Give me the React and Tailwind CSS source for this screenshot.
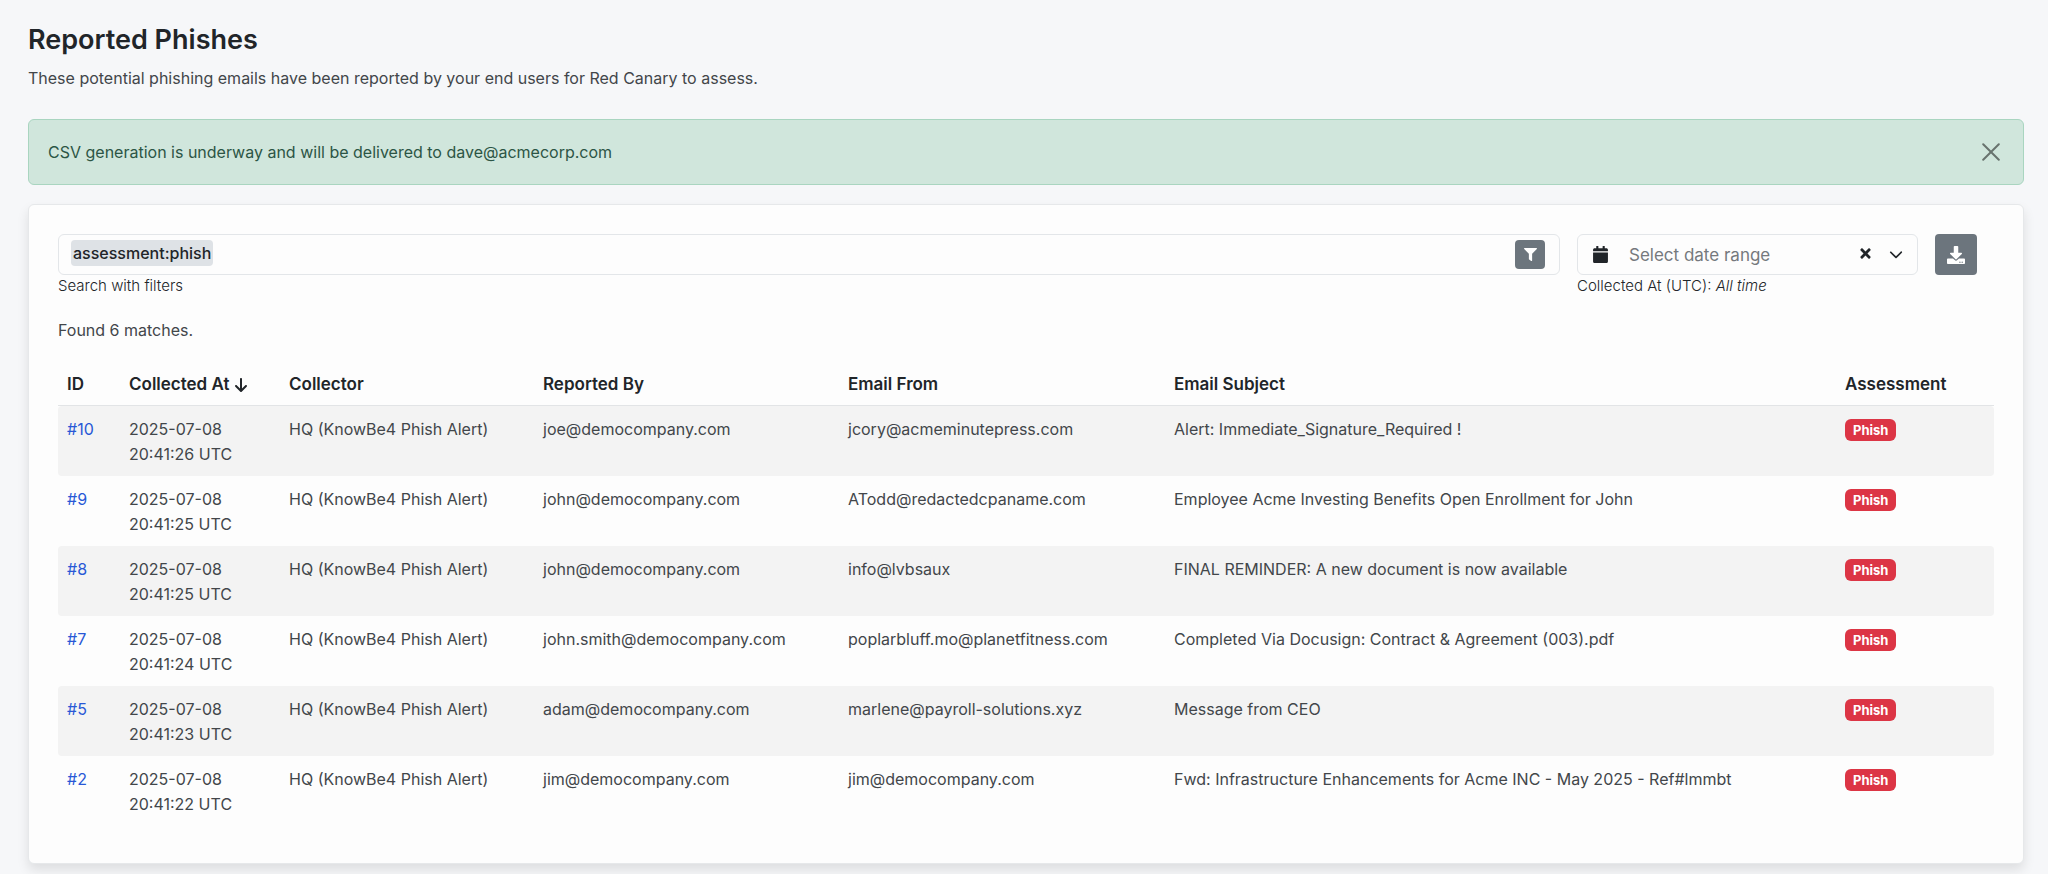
import { FaCalendar, FaDownload, FaFilter, FaTimes } from "react-icons/fa";
import { FaArrowDown, FaChevronDown } from "react-icons/fa6";

const reports = [
  { id: "#10", time: "20:41:26 UTC", by: "joe@democompany.com", from: "jcory@acmeminutepress.com", subject: "Alert: Immediate_Signature_Required !" },
  { id: "#9", time: "20:41:25 UTC", by: "john@democompany.com", from: "ATodd@redactedcpaname.com", subject: "Employee Acme Investing Benefits Open Enrollment for John" },
  { id: "#8", time: "20:41:25 UTC", by: "john@democompany.com", from: "info@lvbsaux", subject: "FINAL REMINDER: A new document is now available" },
  { id: "#7", time: "20:41:24 UTC", by: "john.smith@democompany.com", from: "poplarbluff.mo@planetfitness.com", subject: "Completed Via Docusign: Contract & Agreement (003).pdf" },
  { id: "#5", time: "20:41:23 UTC", by: "adam@democompany.com", from: "marlene@payroll-solutions.xyz", subject: "Message from CEO" },
  { id: "#2", time: "20:41:22 UTC", by: "jim@democompany.com", from: "jim@democompany.com", subject: "Fwd: Infrastructure Enhancements for Acme INC - May 2025 - Ref#lmmbt" },
];

function Notice() {
  return (
    <div role="alert" className="flex min-h-[66px] items-center justify-between rounded-md border border-[#a9d5c0] bg-[#d0e6dc] pr-5 pl-[19px] text-[#2c5545]">
      <p>CSV generation is underway and will be delivered to dave@acmecorp.com</p>
      <button type="button" aria-label="Close" className="flex size-6 items-center justify-center text-[#68736e]">
        <svg viewBox="0 0 18 18" className="size-[18px]" fill="none" stroke="currentColor" strokeWidth="2" strokeLinecap="round" aria-hidden="true">
          <path d="M1.2 1.2 16.8 16.8M16.8 1.2 1.2 16.8" />
        </svg>
      </button>
    </div>
  );
}

function Toolbar() {
  return (
    <div className="flex items-start gap-[17px] pr-[17px]">
      <div className="min-w-0 flex-1">
        <div className="flex h-[41px] items-start rounded-md border border-[#e3e6e9] pt-[5px] pr-3.5 pl-3">
          <input
            id="search"
            defaultValue="assessment:phish"
            className="field-sizing-content h-[26px] rounded bg-[#dee2e6] px-0.5 font-medium text-[#212529] outline-none"
          />
          <button type="button" aria-label="Filters" className="ml-auto flex h-[29px] w-[30px] items-center justify-center rounded bg-[#6c757d] text-white">
            <FaFilter className="size-[13px]" />
          </button>
        </div>
        <label htmlFor="search" className="block text-[15px] leading-[22px] font-light text-[#212529]">Search with filters</label>
      </div>
      <div className="w-[341px]">
        <div className="flex h-[41px] items-center rounded-md border border-[#e3e6e9] pr-3.5 pl-3.5 text-[#212529]">
          <FaCalendar className="size-[17px]" />
          <input
            id="range"
            placeholder="Select date range"
            className="ml-5 min-w-0 flex-1 pt-px text-[17px] outline-none placeholder:text-[#75797d]"
          />
          <button type="button" aria-label="Clear date range" className="pb-0.5"><FaTimes className="size-[15px]" /></button>
          <button type="button" aria-label="Open date range" className="ml-4 pb-0.5"><FaChevronDown className="size-[14px]" /></button>
        </div>
        <label htmlFor="range" className="block text-[15px] leading-[22px] font-light text-[#212529]">Collected At (UTC): <em>All time</em></label>
      </div>
      <button type="button" aria-label="Download" className="flex h-[41px] w-[42px] items-center justify-center rounded bg-[#6c757d] text-white">
        <FaDownload className="size-[18px]" />
      </button>
    </div>
  );
}

function ReportTable() {
  return (
    <table className="mt-[21px] w-full table-fixed border-separate border-spacing-0 text-left">
      <colgroup>
        <col className="w-[62px]" />
        <col className="w-[160px]" />
        <col className="w-[254px]" />
        <col className="w-[305px]" />
        <col className="w-[326px]" />
        <col />
        <col className="w-[158px]" />
      </colgroup>
      <thead>
        <tr className="text-[17px] text-[#212529] *:border-b *:border-[#e2e4e6] *:px-[9px] *:py-2 *:font-semibold *:whitespace-nowrap">
          <th>ID</th>
          <th aria-sort="descending">
            <button type="button" className="flex items-center gap-1">
              Collected At <FaArrowDown className="size-4" />
            </button>
          </th>
          <th>Collector</th>
          <th>Reported By</th>
          <th>Email From</th>
          <th>Email Subject</th>
          <th>Assessment</th>
        </tr>
      </thead>
      <tbody>
        {reports.map((r) => (
          <tr key={r.id} className="align-top odd:bg-[#f3f3f3] *:px-[9px] *:pt-[11px] *:pb-[9px] *:first:rounded-l *:last:rounded-r">
            <td><a href={"#report-" + r.id.slice(1)} className="text-[#2858d6]">{r.id}</a></td>
            <td>2025-07-08<br />{r.time}</td>
            <td>HQ (KnowBe4 Phish Alert)</td>
            <td>{r.by}</td>
            <td>{r.from}</td>
            <td>{r.subject}</td>
            <td>
              <span className="mt-0.5 inline-block rounded-md bg-[#dc3545] px-2 text-[13px] leading-[22px] font-bold text-white align-top">Phish</span>
            </td>
          </tr>
        ))}
      </tbody>
    </table>
  );
}

export default function App() {
  return (
    <main className="min-h-screen bg-[#f6f7f9] pt-[21px] pr-6 pb-[11px] pl-7 font-['Inter',sans-serif] text-base leading-[25px] font-normal text-[#42464a]">
      <h1 className="text-[27px] leading-[38px] font-semibold text-[#212529]">Reported Phishes</h1>
      <p className="mt-[7px] mb-7">These potential phishing emails have been reported by your end users for Red Canary to assess.</p>
      <Notice />
      <section className="mt-[19px] rounded-md border border-[#e6e8ea] bg-[#fdfdfd] px-[29px] pt-[29px] pb-[37px] shadow-[0_6px_12px_rgba(0,0,0,0.1)]">
        <Toolbar />
        <p className="mt-[21px]">Found 6 matches.</p>
        <ReportTable />
      </section>
    </main>
  );
}
